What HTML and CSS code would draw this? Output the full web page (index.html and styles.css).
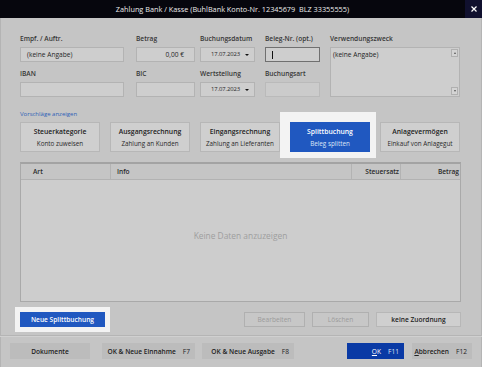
FILE: index.html
```html
<!DOCTYPE html>
<html lang="de">
<head>
<meta charset="utf-8">
<title>Zahlung Bank / Kasse</title>
<link rel="stylesheet" href="styles.css">
</head>
<body>
<div class="titlebar">
  <div class="title">Zahlung Bank / Kasse (BuhlBank Konto-Nr. 12345679&nbsp; BLZ 33355555)</div>
  <div class="close"><svg width="6" height="6" viewBox="0 0 6 6"><path d="M0.5 0.5L5.5 5.5M5.5 0.5L0.5 5.5" stroke="#fff" stroke-width="1.2"/></svg></div>
</div>
<div class="window">
  <div class="form">
    <div class="lbl c1 r1">Empf. / Auftr.</div>
    <div class="inp c1 r2 w104">(keine Angabe)</div>
    <div class="lbl c1 r3">IBAN</div>
    <div class="inp c1 r4 w104"></div>

    <div class="lbl c2 r1">Betrag</div>
    <div class="inp c2 r2 w59 right">0,00 €</div>
    <div class="lbl c2 r3">BIC</div>
    <div class="inp c2 r4 w59"></div>

    <div class="lbl c3 r1">Buchungsdatum</div>
    <div class="inp c3 r2 w55 date"><span>17.07.2023</span><i class="caret-down"></i></div>
    <div class="lbl c3 r3">Wertstellung</div>
    <div class="inp c3 r4 w55 date"><span>17.07.2023</span><i class="caret-down"></i></div>

    <div class="lbl c4 r1">Beleg-Nr. (opt.)</div>
    <div class="inp c4 r2 w55 focus"><i class="cursor"></i></div>
    <div class="lbl c4 r3">Buchungsart</div>
    <div class="inp c4 r4 w55 disabled"></div>

    <div class="lbl c5 r1">Verwendungszweck</div>
    <div class="area c5">
      <span class="area-text">(keine Angabe)</span>
      <div class="sb">
        <div class="sb-btn"><i class="tri-up"></i></div>
        <div class="sb-btn"><i class="tri-down"></i></div>
      </div>
    </div>
  </div>

  <div class="link">Vorschläge anzeigen</div>

  <div class="sugg">
    <div class="sbtn"><div class="t">Steuerkategorie</div><div class="s">Konto zuweisen</div></div>
    <div class="sbtn"><div class="t">Ausgangsrechnung</div><div class="s">Zahlung an Kunden</div></div>
    <div class="sbtn"><div class="t">Eingangsrechnung</div><div class="s">Zahlung an Lieferanten</div></div>
    <div class="sbtn active"><div class="t">Splittbuchung</div><div class="s">Beleg splitten</div></div>
    <div class="sbtn"><div class="t">Anlagevermögen</div><div class="s">Einkauf von Anlagegut</div></div>
  </div>

  <div class="table">
    <div class="thead">
      <div class="th art">Art</div>
      <div class="th info">Info</div>
      <div class="th num">Steuersatz</div>
      <div class="th num last">Betrag</div>
    </div>
    <div class="tbody">Keine Daten anzuzeigen</div>
  </div>

  <div class="actions">
    <div class="btn primary hl">Neue Splittbuchung</div>
    <div class="spacer"></div>
    <div class="btn dis w61">Bearbeiten</div>
    <div class="btn dis w57">Löschen</div>
    <div class="btn w85">keine Zuordnung</div>
  </div>

  <div class="sep"></div>

  <div class="footer">
    <div class="fbtn center w80">Dokumente</div>
    <div class="fbtn w93"><span>OK &amp; Neue Einnahme</span><span class="key">F7</span></div>
    <div class="fbtn w92"><span>OK &amp; Neue Ausgabe</span><span class="key">F8</span></div>
    <div class="spacer"></div>
    <div class="fbtn ok w57"><span><u>O</u>K</span><span class="key">F11</span></div>
    <div class="fbtn w60"><span><u>A</u>bbrechen</span><span class="key">F12</span></div>
  </div>
</div>
</body>
</html>
```

FILE: styles.css
```css
* { box-sizing: border-box; margin: 0; padding: 0; }
html, body { width: 482px; height: 367px; overflow: hidden; }
body {
  font-family: "Open Sans", "Noto Sans", sans-serif;
  font-size: 6.6px;
  color: #222;
  background: #c5c5c5;
}

.titlebar { height: 18px; background: #06060d; display: flex; }
.title {
  flex: 1;
  color: #ececec;
  font-size: 7.3px;
  line-height: 18px;
  text-align: center;
}
.close {
  width: 17px;
  height: 18px;
  background: #10102e;
  display: flex;
  align-items: center;
  justify-content: center;
}

.window {
  height: 349px;
  display: flex;
  flex-direction: column;
  box-shadow: inset 1px 0 #b4b4b4, inset -1px 0 #b4b4b4;
}

/* form */
.form {
  margin: 15px 0 0 20px;
  display: grid;
  grid-template-columns: 116px 64px 65px 65px 131px;
  grid-template-rows: 14px 15px 20px 15px;
}
.c1 { grid-column: 1; } .c2 { grid-column: 2; } .c3 { grid-column: 3; }
.c4 { grid-column: 4; } .c5 { grid-column: 5; }
.r1 { grid-row: 1; } .r2 { grid-row: 2; } .r3 { grid-row: 3; } .r4 { grid-row: 4; }

.lbl {
  align-self: end;
  padding-bottom: 3px;
  line-height: 10px;
  font-weight: 600;
  color: #363636;
}
.inp {
  height: 15px;
  background: #cecece;
  border: 1px solid #b3b3b3;
  line-height: 13px;
  padding: 0 6px;
  color: #262626;
  display: flex;
  align-items: center;
}
.w104 { width: 104px; }
.w59 { width: 59px; }
.w55 { width: 55px; }
.right { justify-content: flex-end; padding-right: 10px; }
.date { justify-content: space-between; padding: 0 5px 0 10px; font-size: 5.9px; letter-spacing: -0.1px; }
.caret-down {
  width: 0; height: 0;
  border-left: 2px solid transparent;
  border-right: 2px solid transparent;
  border-top: 2.5px solid #111;
}
.focus { border-color: #707070; padding-left: 6px; }
.cursor { width: 1px; height: 8px; background: #111; }
.disabled { background: #cbcbcb; border-color: #bababa; }

.area {
  grid-row: 2 / 5;
  width: 130px;
  height: 50px;
  background: #cecece;
  border: 1px solid #b3b3b3;
  display: flex;
  justify-content: space-between;
  padding: 1px;
}
.area-text { line-height: 11px; padding-left: 1px; }
.sb { display: flex; flex-direction: column; justify-content: space-between; }
.sb-btn {
  width: 7px; height: 8px;
  border: 1px solid #b0b0b0;
  background: #d4d4d4;
  display: flex; align-items: center; justify-content: center;
}
.tri-up, .tri-down {
  width: 0; height: 0;
  border-left: 1.5px solid transparent;
  border-right: 1.5px solid transparent;
}
.tri-up { border-bottom: 2px solid #555; }
.tri-down { border-top: 2px solid #555; }

/* link */
.link {
  margin: 12px 0 0 20px;
  line-height: 10px;
  color: #2d5fb7;
  font-size: 6px;
}

/* suggestion buttons */
.sugg { display: flex; gap: 10px; margin: 3px 0 0 20px; }
.sbtn {
  width: 80px;
  height: 30px;
  background: #cfcfcf;
  border: 1px solid #b7b7b7;
  display: flex;
  flex-direction: column;
  align-items: center;
  justify-content: center;
  gap: 4px;
}
.sbtn .t { font-weight: 600; font-size: 6.8px; line-height: 9px; color: #222; }
.sbtn .s { font-size: 6.3px; line-height: 7px; color: #2a2a2a; }
.sbtn.active {
  background: #2058c0;
  border-color: #2058c0;
  box-shadow: -2px -2px 0 8px #f3f3f3;
}
.sbtn.active .t { color: #fff; }
.sbtn.active .s { color: #dde6f7; }

/* table */
.table {
  margin: 10px 0 0 20px;
  width: 441px;
  height: 140px;
  border: 1px solid #a9a9a9;
  border-top: 2px solid #a3a3a3;
  background: #cdcdcd;
  display: flex;
  flex-direction: column;
}
.thead {
  height: 16px;
  display: grid;
  grid-template-columns: 90px 241px 49px 1fr;
  background: #c5c5c5;
  border-bottom: 1px solid #b2b2b2;
}
.th {
  font-weight: 600;
  line-height: 15px;
  border-right: 1px solid #b3b3b3;
  color: #2a2a2a;
}
.th.art { padding-left: 12px; }
.th.info { padding-left: 6px; }
.th.num { text-align: right; padding-right: 1px; }
.th.last { border-right: none; }
.tbody {
  flex: 1;
  display: flex;
  align-items: center;
  justify-content: center;
  padding-bottom: 11px;
  color: #9e9e9e;
  font-size: 8.4px;
}

/* actions */
.actions {
  display: flex;
  gap: 7px;
  margin: 10px 0 0 20px;
  width: 441px;
  height: 15px;
}
.spacer { flex: 1; }
.btn {
  height: 15px;
  display: flex;
  align-items: center;
  justify-content: center;
  background: #cfcfcf;
  border: 1px solid #b7b7b7;
  font-weight: 600;
  color: #222;
}
.btn.primary {
  width: 85px;
  background: #2058c0;
  border-color: #2058c0;
  color: #fff;
  box-shadow: 0 0 0 5px #f3f3f3;
}
.btn.dis { background: #c7c7c7; border-color: #b0b0b0; color: #9b9b9b; font-weight: 400; }
.w61 { width: 61px; }
.w57 { width: 57px; }
.w85 { width: 85px; }

.sep {
  margin-top: 8px;
  height: 2px;
  border-top: 1px solid #b5b5b5;
  border-bottom: 1px solid #d0d0d0;
}

/* footer */
.footer {
  display: flex;
  gap: 7px;
  margin: 6px 0 0 10px;
  width: 462px;
  height: 16px;
}
.fbtn {
  height: 16px;
  background: #bcbcbc;
  display: flex;
  align-items: center;
  justify-content: flex-end;
  gap: 7px;
  padding-right: 5px;
  font-weight: 600;
  color: #222;
}
.fbtn .key { font-weight: 400; }
.fbtn.center { justify-content: center; padding-right: 0; }
.fbtn.w80 { width: 80px; margin-right: 5px; }
.w93 { width: 93px; }
.w92 { width: 92px; }
.w60 { width: 60px; }
.fbtn.ok { background: #0a3aa5; color: #fff; font-weight: 400; margin-right: 1px; }
.fbtn.ok .key { color: #dfe5f5; }
```
